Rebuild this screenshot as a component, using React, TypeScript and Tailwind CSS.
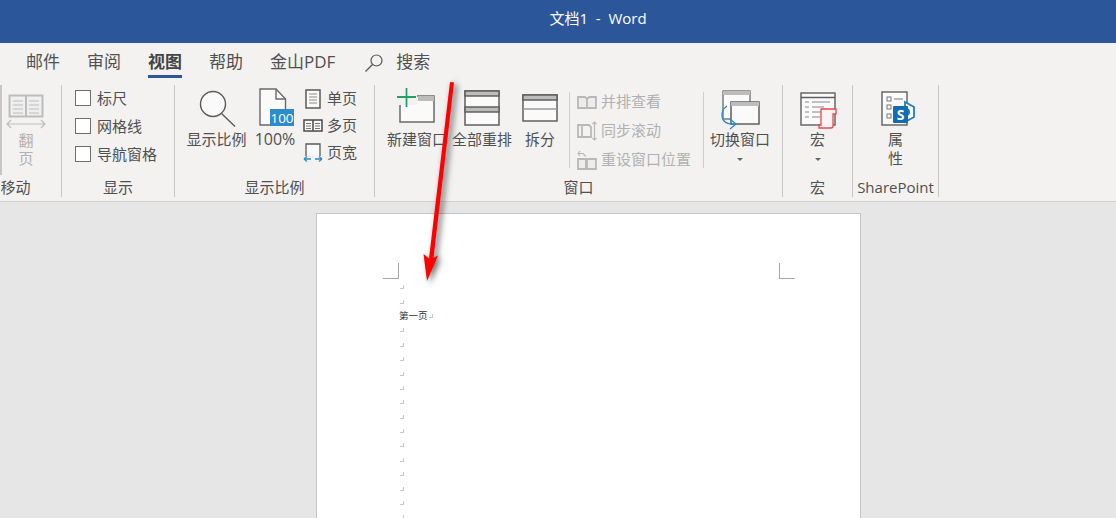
import type { ReactNode } from 'react';

const FONT = 'font-["Open_Sans","Noto_Sans_CJK_SC",sans-serif]';

const TABS = ['邮件', '审阅', '视图', '帮助', '金山PDF'];

function Group({ width, label, labelClass, children }: { width: string; label: string; labelClass?: string; children: ReactNode }) {
  return (
    <div className={`${width} shrink-0 h-[112px] mt-px border-r border-[#c8c6c4] flex flex-col`}>
      <div className="h-[95px] flex">{children}</div>
      <div className={`text-center text-[15px] leading-[20px] whitespace-nowrap ${labelClass ?? ''}`}>{label}</div>
    </div>
  );
}

function BigButton({ width, icon, lines, caret, textClass }: { width: string; icon: ReactNode; lines: string[]; caret?: boolean; textClass?: string }) {
  return (
    <div className={`${width} shrink-0 flex flex-col items-center pt-[3px]`}>
      <div className="h-[42px] flex items-start justify-center">{icon}</div>
      {lines.map((l) => (
        <div key={l} className={`${textClass ?? 'text-[15px]'} leading-[19px] whitespace-nowrap`}>{l}</div>
      ))}
      {caret && <div className="mt-[9px] w-0 h-0 border-x-[3px] border-x-transparent border-t-[3px] border-t-[#666]" />}
    </div>
  );
}

function CheckRow({ label }: { label: string }) {
  return (
    <div className="h-[28px] flex items-center gap-[6px]">
      <div className="w-4 h-4 bg-white border border-[#6e6e6e]" />
      <span className="text-[15px] whitespace-nowrap">{label}</span>
    </div>
  );
}

function SmallRow({ icon, label, className }: { icon: ReactNode; label: string; className?: string }) {
  return (
    <div className={`shrink-0 flex items-center gap-1 whitespace-nowrap text-[15px] ${className ?? ''}`}>
      <div className="w-[20px] flex justify-center">{icon}</div>
      <span>{label}</span>
    </div>
  );
}

function BookIcon() {
  return (
    <svg width="42" height="36" viewBox="0 0 42 36" fill="none" stroke="#bdbdbd">
      <rect x="4.500" y="1.500" width="33" height="21" fill="#efefef" strokeWidth="2" />
      <path d="M21 1v22" strokeWidth="2" />
      <path d="M8 7h10M8 11h10M8 15h10M8 19h10M24 7h10M24 11h10M24 15h10M24 19h10" strokeWidth="1.200" />
      <path d="M2 30h38M6 26l-4 4 4 4M36 26l4 4-4 4" strokeWidth="1.200" />
    </svg>
  );
}

function ZoomIcon() {
  return (
    <svg className="ml-[2px]" width="40" height="40" viewBox="0 0 40 40" fill="none" stroke="#5a5a5a" strokeWidth="1.400">
      <circle cx="15" cy="16" r="12.500" fill="#fafafa" />
      <path d="M23.500 25.500L37 38.500" />
    </svg>
  );
}

function Page100Icon() {
  return (
    <svg className="ml-[4px]" width="36" height="40" viewBox="0 0 36 40">
      <path d="M1 1h16l9.500 10v26H1z" fill="#fafafa" stroke="#6a6a6a" strokeWidth="1.400" />
      <path d="M17 1v10h9.500" fill="none" stroke="#6a6a6a" strokeWidth="1.400" />
      <rect x="11" y="21" width="24" height="17" fill="#2c8ccb" />
      <text x="23" y="35" textAnchor="middle" fontSize="13.500" fill="#fff" fontFamily="Open Sans">100</text>
    </svg>
  );
}

function SinglePageIcon() {
  return (
    <svg width="16" height="20" viewBox="0 0 16 20" fill="#fafafa" stroke="#5a5a5a">
      <rect x="1" y="1" width="14" height="18" strokeWidth="1.500" />
      <path d="M4 5h8M4 8h8M4 11h8M4 14h8" stroke="#888" />
    </svg>
  );
}

function MultiPageIcon() {
  return (
    <svg width="20" height="13" viewBox="0 0 20 13" fill="#fafafa" stroke="#4a4a4a">
      <rect x="1" y="1" width="18" height="11" strokeWidth="1.500" />
      <path d="M10 1v11" strokeWidth="1.500" />
      <path d="M3 4.500h5M3 7h5M3 9.500h5M12 4.500h5M12 7h5M12 9.500h5" stroke="#777" />
    </svg>
  );
}

function PageWidthIcon() {
  return (
    <svg width="20" height="20" viewBox="0 0 20 20" fill="none">
      <path d="M3 13V1h14v12" fill="#fafafa" stroke="#5a5a5a" strokeWidth="1.300" />
      <path d="M1 16h7M1 16l3-2.500M1 16l3 2.500M12 16h7M19 16l-3-2.500M19 16l-3 2.500" stroke="#2c8ccb" strokeWidth="1.300" />
    </svg>
  );
}

function NewWindowIcon() {
  return (
    <svg width="40" height="38" viewBox="0 0 40 38" fill="none">
      <rect x="3" y="8" width="34" height="26" fill="#fafafa" stroke="#6a6a6a" strokeWidth="1.500" />
      <rect x="21" y="8" width="16" height="5" fill="#bdbcbb" />
      <rect x="0" y="0" width="20" height="17" fill="#f3f2f1" />
      <path d="M0 9h19M9.500 0v19" stroke="#21a366" strokeWidth="1.800" />
    </svg>
  );
}

function ArrangeIcon() {
  return (
    <svg className="mt-[2px]" width="36" height="36" viewBox="0 0 36 36" fill="#fafafa" stroke="#5f5f5f" strokeWidth="1.500">
      <rect x="1" y="1" width="34" height="34" />
      <rect x="1" y="1" width="34" height="5" fill="#bdbcbb" />
      <rect x="1" y="17" width="34" height="5" fill="#bdbcbb" />
    </svg>
  );
}

function SplitIcon() {
  return (
    <svg className="mt-[6px]" width="36" height="28" viewBox="0 0 36 28" fill="#fafafa" stroke="#5f5f5f" strokeWidth="1.500">
      <rect x="1" y="1" width="34" height="26" />
      <rect x="1" y="1" width="34" height="5" fill="#bdbcbb" />
      <path d="M1 15h34" stroke="#9a9a9a" />
    </svg>
  );
}

function SideBySideIcon() {
  return (
    <svg width="20" height="14" viewBox="0 0 20 14" fill="#ececec" stroke="#b8b8b8" strokeWidth="1.800">
      <path d="M1 2h7l2 2v9H1zM10 4l2-2h7v11h-9z" />
    </svg>
  );
}

function SyncScrollIcon() {
  return (
    <svg width="20" height="20" viewBox="0 0 20 20" fill="none" stroke="#b8b8b8" strokeWidth="1.800">
      <path d="M1 4h4v12H1zM5 4h7l2 2v10H5z" />
      <path d="M17.500 1v18M15.500 3l2-2 2 2M15.500 17l2 2 2-2" strokeWidth="1.200" />
    </svg>
  );
}

function ResetPosIcon() {
  return (
    <svg width="20" height="20" viewBox="0 0 20 20" fill="none" stroke="#b8b8b8" strokeWidth="1.800">
      <path d="M1 9h8v10H1zM10 9h9v10h-9z" fill="#ececec" />
      <path d="M3 1L1 3.500 3 6M1 3.500h5l3 3" strokeWidth="1.200" />
    </svg>
  );
}

function SwitchWindowIcon() {
  return (
    <svg className="mt-[2px]" width="40" height="40" viewBox="0 0 40 40" fill="none">
      <rect x="3" y="1" width="27" height="28" fill="#fafafa" stroke="#6a6a6a" strokeWidth="1.300" />
      <rect x="3" y="1" width="27" height="4" fill="#bdbcbb" />
      <rect x="11" y="12" width="28" height="22" fill="#fafafa" stroke="#5f5f5f" strokeWidth="1.500" />
      <rect x="11" y="12" width="28" height="4" fill="#bdbcbb" />
      <path d="M7 17C-1 22 0 36 14 35M10 30l6 5-6 5" stroke="#2c8ccb" strokeWidth="1.300" transform="translate(0 -1)" />
    </svg>
  );
}

function MacroIcon() {
  return (
    <svg className="mt-[4px] ml-[2px]" width="38" height="38" viewBox="0 0 38 38" fill="none">
      <rect x="1" y="1" width="34" height="32" fill="#fafafa" stroke="#5f5f5f" strokeWidth="1.400" />
      <path d="M1 5.500h34" stroke="#5f5f5f" strokeWidth="1.400" />
      <path d="M5 10h4M12 10h18M5 15h4M12 15h12M5 20h4M12 20h10M5 25h4M12 25h8" stroke="#888" />
      <path d="M21 17h15v5h-3v12q0 2-2 2H19v-3h2z" fill="#fdf3f3" stroke="#e8474c" strokeWidth="1.300" />
    </svg>
  );
}

function PropsIcon() {
  return (
    <svg className="mt-[3px] ml-[6px]" width="36" height="38" viewBox="0 0 36 38" fill="none">
      <rect x="1" y="1" width="25" height="33" fill="#fafafa" stroke="#5f5f5f" strokeWidth="1.400" />
      <rect x="6" y="6" width="4" height="4" stroke="#777" />
      <rect x="6" y="14" width="4" height="4" stroke="#777" />
      <rect x="6" y="23" width="4" height="4" stroke="#777" />
      <path d="M13 8h9" stroke="#777" />
      <path d="M24 11l9 5v10l-9 5z" fill="#fff" stroke="#1f7cc4" strokeWidth="1.800" />
      <circle cx="25" cy="21" r="4" fill="#1f7cc4" />
      <rect x="12" y="15" width="15" height="17" rx="1" fill="#0f6cb5" />
      <text x="19.500" y="29" textAnchor="middle" fontSize="14" fontWeight="700" fill="#fff" fontFamily="Open Sans">S</text>
    </svg>
  );
}

function Arrow() {
  return (
    <svg
      className="absolute left-0 top-0 pointer-events-none drop-shadow-[3px_2px_3px_rgba(0,0,0,0.6)]"
      width="1116"
      height="518"
      viewBox="0 0 1116 518"
    >
      <path d="M450 82L454 82.500L433.500 258L438 255.500L427 281L423.500 254L429 258.500Z" fill="#ff0000" />
    </svg>
  );
}

function DocPage() {
  const marks = Array.from({ length: 17 });
  return (
    <div className="ml-[316px] mt-[11px] w-[545px] h-[400px] bg-white border border-[#c6c6c6] pl-[66px] pr-[65px] pt-[49px]">
      <div className="flex justify-between h-[16px]">
        <div className="w-[16px] h-[16px] border-r border-b border-[#a6a6a6]" />
        <div className="w-[16px] h-[16px] border-l border-b border-[#a6a6a6]" />
      </div>
      <div className="pl-[16px] pt-px">
        {marks.map((_, i) => (
          <div key={i} className="h-[14.400px] flex items-center text-[9.500px] leading-none text-[#333]">
            {i === 2 && <span>第一页</span>}
            <span className="w-[4px] h-[4px] ml-[1px] border-r border-b border-[#c8c8c8]" />
          </div>
        ))}
      </div>
    </div>
  );
}

export default function App() {
  return (
    <div className={`relative w-[1116px] h-[518px] overflow-hidden bg-[#e6e6e6] text-[#505050] ${FONT}`}>
      <div className="h-[43px] bg-[#2b579a] text-white text-[15px] flex items-center justify-center pl-[80px] pb-[7px]">
        文档1&nbsp; -&nbsp; Word
      </div>

      <div className="h-[41px] bg-[#f3f2f1] flex items-start pt-[9px] pl-[26px] text-[17px] leading-[20px]">
        {TABS.map((t) => (
          <div key={t} className={`mr-[27px] ${t === '视图' ? 'font-bold text-[#444] border-b-[3px] border-[#2b579a] pb-[3px]' : ''}`}>
            {t}
          </div>
        ))}
        <svg className="ml-[2px] mt-[1px]" width="20" height="20" viewBox="0 0 20 20" fill="none" stroke="#555" strokeWidth="1.200">
          <circle cx="12.500" cy="7.500" r="5.500" />
          <path d="M8.500 11.500L1.500 18.500" />
        </svg>
        <div className="ml-[12px]">搜索</div>
      </div>

      <div className="h-[118px] bg-[#f3f2f1] border-b border-[#d2d0ce] flex items-start">
        <Group width="w-[62px]" label="移动" labelClass="pr-[30px]">
          <div className="w-[2px] h-[90px] bg-[#c8c6c4]" />
          <div className="w-[48px] flex flex-col items-center pt-[9px] text-[#b1b1b1] text-[15px] leading-[18px]">
            <div className="h-[36px]">
              <BookIcon />
            </div>
            <div className="mt-[1px]">翻</div>
            <div>页</div>
          </div>
        </Group>

        <Group width="w-[113px]" label="显示">
          <div className="pl-[13px] -mt-[1px]">
            <CheckRow label="标尺" />
            <CheckRow label="网格线" />
            <CheckRow label="导航窗格" />
          </div>
        </Group>

        <Group width="w-[200px]" label="显示比例">
          <BigButton width="w-[83px]" icon={<ZoomIcon />} lines={['显示比例']} />
          <BigButton width="w-[34px]" icon={<Page100Icon />} lines={['100%']} textClass="text-[16px]" />
          <div className="ml-[11px] flex flex-col">
            <SmallRow className="h-[27px]" icon={<SinglePageIcon />} label="单页" />
            <SmallRow className="h-[27px]" icon={<MultiPageIcon />} label="多页" />
            <SmallRow className="h-[27px]" icon={<PageWidthIcon />} label="页宽" />
          </div>
        </Group>

        <Group width="w-[408px]" label="窗口">
          <div className="ml-[12px]">
            <BigButton width="w-[60px]" icon={<NewWindowIcon />} lines={['新建窗口']} />
          </div>
          <div className="ml-[5px]">
            <BigButton width="w-[60px]" icon={<ArrangeIcon />} lines={['全部重排']} />
          </div>
          <div className="ml-[13px]">
            <BigButton width="w-[30px]" icon={<SplitIcon />} lines={['拆分']} />
          </div>
          <div className="ml-[14px] mt-[7px] h-[76px] border-l border-[#d2d0ce]" />
          <div className="ml-[7px] mt-[2px] flex flex-col text-[#b1b1b1]">
            <SmallRow className="h-[29px]" icon={<SideBySideIcon />} label="并排查看" />
            <SmallRow className="h-[29px]" icon={<SyncScrollIcon />} label="同步滚动" />
            <SmallRow className="h-[29px]" icon={<ResetPosIcon />} label="重设窗口位置" />
          </div>
          <div className="ml-[12px] mt-[7px] h-[76px] border-l border-[#d2d0ce]" />
          <div className="ml-[6px]">
            <BigButton width="w-[60px]" icon={<SwitchWindowIcon />} lines={['切换窗口']} caret />
          </div>
        </Group>

        <Group width="w-[70px]" label="宏">
          <BigButton width="w-[69px]" icon={<MacroIcon />} lines={['宏']} caret />
        </Group>

        <Group width="w-[86px]" label="SharePoint">
          <BigButton width="w-[85px]" icon={<PropsIcon />} lines={['属', '性']} />
        </Group>
      </div>

      <DocPage />
      <Arrow />
    </div>
  );
}
